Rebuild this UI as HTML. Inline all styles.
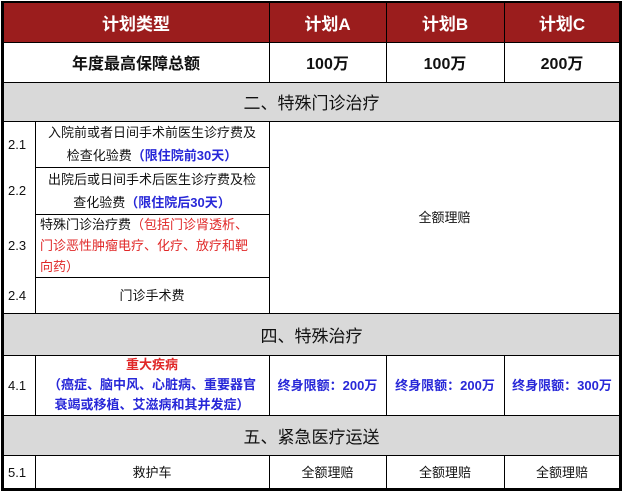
<!DOCTYPE html>
<html><head><meta charset="utf-8"><style>
body{margin:0;width:623px;height:492px;background:#fff;overflow:hidden;font-family:"Liberation Sans","Noto Sans CJK SC",sans-serif;}
.c{position:absolute;box-sizing:border-box;display:flex;align-items:center;justify-content:center;text-align:center;color:#111;}
.c>div{width:100%;}
.h{background:#9b1d1d;color:#fff;font-weight:bold;font-size:17px;}
.g{background:#d9d9d9;font-size:17px;}
.n{font-size:13px;justify-content:flex-start;padding-left:5px;}
.t{font-size:13px;line-height:23px;white-space:nowrap;}
.b{color:#2828d8;font-weight:bold;}
.r{color:#e02828;}
.rb{color:#e02828;font-weight:bold;}
.ln{position:absolute;background:#000;}
</style></head><body>
<div class="c h" style="left:3px;top:3px;width:266px;height:39px">计划类型</div>
<div class="c h" style="left:269px;top:3px;width:117px;height:39px">计划A</div>
<div class="c h" style="left:386px;top:3px;width:118px;height:39px">计划B</div>
<div class="c h" style="left:504px;top:3px;width:116px;height:39px">计划C</div>
<div class="c" style="left:3px;top:42px;width:266px;height:40px;font-size:16px;font-weight:bold">年度最高保障总额</div>
<div class="c" style="left:269px;top:42px;width:117px;height:40px;font-size:16px;font-weight:bold">100万</div>
<div class="c" style="left:386px;top:42px;width:118px;height:40px;font-size:16px;font-weight:bold">100万</div>
<div class="c" style="left:504px;top:42px;width:116px;height:40px;font-size:16px;font-weight:bold">200万</div>
<div class="c g" style="left:3px;top:82px;width:617px;height:39px">二、特殊门诊治疗</div>
<div class="c n" style="left:3px;top:121px;width:32px;height:46px">2.1</div>
<div class="c t" style="left:35px;top:121px;width:234px;height:46px"><div>入院前或者日间手术前医生诊疗费及<br>检查化验费<span class="b">（限住院前30天）</span></div></div>
<div class="c n" style="left:3px;top:167px;width:32px;height:47px">2.2</div>
<div class="c t" style="left:35px;top:167px;width:234px;height:47px"><div>出院后或日间手术后医生诊疗费及检<br>查化验费<span class="b">（限住院后30天）</span></div></div>
<div class="c n" style="left:3px;top:214px;width:32px;height:63px">2.3</div>
<div class="c t" style="left:35px;top:214px;width:234px;height:63px;line-height:21px"><div style="text-align:left;padding-left:5px">特殊门诊治疗费<span class="r">（包括门诊肾透析、</span><br><span class="r">门诊恶性肿瘤电疗、化疗、放疗和靶</span><br><span class="r">向药）</span></div></div>
<div class="c n" style="left:3px;top:277px;width:32px;height:36px">2.4</div>
<div class="c t" style="left:35px;top:277px;width:234px;height:36px">门诊手术费</div>
<div class="c t" style="left:269px;top:121px;width:351px;height:192px">全额理赔</div>
<div class="c g" style="left:3px;top:313px;width:617px;height:42px">四、特殊治疗</div>
<div class="c n" style="left:3px;top:355px;width:32px;height:60px">4.1</div>
<div class="c t" style="left:35px;top:355px;width:234px;height:60px;line-height:20px"><div><span class="rb">重大疾病</span><br><span class="b">（癌症、脑中风、心脏病、重要器官<br>衰竭或移植、艾滋病和其并发症）</span></div></div>
<div class="c t b" style="left:269px;top:355px;width:117px;height:60px">终身限额：200万</div>
<div class="c t b" style="left:386px;top:355px;width:118px;height:60px">终身限额：200万</div>
<div class="c t b" style="left:504px;top:355px;width:116px;height:60px">终身限额：300万</div>
<div class="c g" style="left:3px;top:415px;width:617px;height:40px">五、紧急医疗运送</div>
<div class="c n" style="left:3px;top:455px;width:32px;height:34px">5.1</div>
<div class="c t" style="left:35px;top:455px;width:234px;height:34px">救护车</div>
<div class="c t" style="left:269px;top:455px;width:117px;height:34px">全额理赔</div>
<div class="c t" style="left:386px;top:455px;width:118px;height:34px">全额理赔</div>
<div class="c t" style="left:504px;top:455px;width:116px;height:34px">全额理赔</div>
<div class="ln" style="left:1px;top:1px;width:621px;height:2px"></div>
<div class="ln" style="left:1px;top:488px;width:621px;height:3px"></div>
<div class="ln" style="left:1px;top:1px;width:3px;height:490px"></div>
<div class="ln" style="left:619px;top:1px;width:3px;height:490px"></div>
<div class="ln" style="left:3px;top:42px;width:617px;height:1px"></div>
<div class="ln" style="left:3px;top:82px;width:617px;height:1px"></div>
<div class="ln" style="left:3px;top:121px;width:617px;height:1px"></div>
<div class="ln" style="left:35px;top:167px;width:234px;height:1px"></div>
<div class="ln" style="left:35px;top:214px;width:234px;height:1px"></div>
<div class="ln" style="left:35px;top:277px;width:234px;height:1px"></div>
<div class="ln" style="left:3px;top:313px;width:617px;height:1px"></div>
<div class="ln" style="left:3px;top:355px;width:617px;height:1px"></div>
<div class="ln" style="left:3px;top:415px;width:617px;height:1px"></div>
<div class="ln" style="left:3px;top:455px;width:617px;height:1px"></div>
<div class="ln" style="left:35px;top:121px;width:1px;height:192px"></div>
<div class="ln" style="left:35px;top:355px;width:1px;height:60px"></div>
<div class="ln" style="left:35px;top:455px;width:1px;height:34px"></div>
<div class="ln" style="left:269px;top:3px;width:1px;height:79px"></div>
<div class="ln" style="left:269px;top:121px;width:1px;height:192px"></div>
<div class="ln" style="left:269px;top:355px;width:1px;height:60px"></div>
<div class="ln" style="left:269px;top:455px;width:1px;height:34px"></div>
<div class="ln" style="left:386px;top:3px;width:1px;height:79px"></div>
<div class="ln" style="left:386px;top:355px;width:1px;height:60px"></div>
<div class="ln" style="left:386px;top:455px;width:1px;height:34px"></div>
<div class="ln" style="left:504px;top:3px;width:1px;height:79px"></div>
<div class="ln" style="left:504px;top:355px;width:1px;height:60px"></div>
<div class="ln" style="left:504px;top:455px;width:1px;height:34px"></div>
</body></html>
